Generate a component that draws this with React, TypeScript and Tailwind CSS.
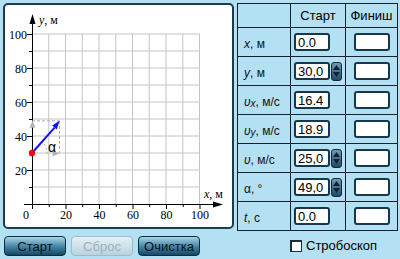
import React from "react";

const X0 = 32;
const Y0 = 204;
const SX = 1.675;
const SY = 1.7;

const px = (v: number) => X0 + v * SX;
const py = (v: number) => Y0 - v * SY;

function Plot() {
  const steps = [0, 10, 20, 30, 40, 50, 60, 70, 80, 90, 100];
  const labels = [20, 40, 60, 80, 100];
  const tipX = px(16.4);
  const tipY = py(48.9);
  const oy = py(30);

  return (
    <svg width={227} height={222} viewBox="5 5 227 222" className="block">
      {steps.slice(1).map((s) => (
        <line key={"gx" + s} x1={px(s)} y1={py(0)} x2={px(s)} y2={py(100)} stroke="#c4c4c4" strokeWidth={1} />
      ))}
      {steps.slice(1).map((s) => (
        <line key={"gy" + s} x1={px(0)} y1={py(s)} x2={px(100)} y2={py(s)} stroke="#c4c4c4" strokeWidth={1} />
      ))}

      {/* axes */}
      <line x1={24} y1={Y0 + 0.5} x2={216} y2={Y0 + 0.5} stroke="#000" strokeWidth={1} />
      <polygon points="223,204.5 213,201.5 213,207.5" fill="#000" />
      <line x1={X0 + 0.5} y1={209} x2={X0 + 0.5} y2={22} stroke="#000" strokeWidth={1} />
      <polygon points="32.5,14 29.5,24 35.5,24" fill="#000" />

      {steps.slice(1).map((s) => (
        <line key={"ty" + s} x1={X0 - (s % 20 === 0 ? 5 : 3)} y1={py(s) + 0.5} x2={X0} y2={py(s) + 0.5} stroke="#000" />
      ))}
      {steps.slice(1).map((s) => (
        <line key={"tx" + s} x1={px(s) + 0.5} y1={Y0} x2={px(s) + 0.5} y2={Y0 + (s % 20 === 0 ? 5 : 3)} stroke="#000" />
      ))}

      <g fontFamily="'Liberation Serif', serif" fontSize={12} fill="#000">
        {labels.map((l) => (
          <text key={"ly" + l} x={27} y={py(l) + 4.5} textAnchor="end">{l}</text>
        ))}
        <text x={26} y={219} textAnchor="middle">0</text>
        {labels.map((l) => (
          <text key={"lx" + l} x={px(l) + 0.5} y={219} textAnchor="middle">{l}</text>
        ))}
        <text x={39} y={24}><tspan fontStyle="italic">y</tspan>, м</text>
        <text x={204} y={198}><tspan fontStyle="italic">x</tspan>, м</text>
      </g>

      {/* components */}
      <line x1={X0} y1={tipY} x2={tipX} y2={tipY} stroke="#aaa" strokeDasharray="3 2" />
      <line x1={tipX} y1={tipY} x2={tipX} y2={oy} stroke="#aaa" strokeDasharray="3 2" />
      <polygon points={`${X0 + 0.5},${tipY} ${X0 - 2.5},${tipY + 7} ${X0 + 3.5},${tipY + 7}`} fill="#b4b4b4" />
      <polygon points={`${tipX},${oy + 0.5} ${tipX - 7},${oy - 2.5} ${tipX - 7},${oy + 3.5}`} fill="#b4b4b4" />
      <path d={`M ${X0 + 15} ${oy + 0.5} A 15 15 0 0 0 ${X0 + 15 * 0.656} ${oy - 15 * 0.755}`} fill="none" stroke="#aaa" strokeDasharray="2 2" />

      {/* velocity */}
      <line x1={X0} y1={oy} x2={54.6} y2={127.6} stroke="#1010ff" strokeWidth={2} />
      <polygon points={`${tipX},${tipY} ${56.8},${129.4} ${52.2},${125.4}`} fill="#1010ff" />
      <circle cx={X0} cy={oy} r={3.2} fill="#ff0000" />

      <text x={48} y={152} fontFamily="'Liberation Sans', sans-serif" fontSize={14} fill="#000">α</text>
    </svg>
  );
}

function Field({ value, spin }: { value?: string; spin?: boolean }) {
  return (
    <div className="flex items-center gap-[1px]">
      <div className="w-[36px] h-[18px] border-2 border-[#17384a] rounded-[3px] bg-white pl-[2px] text-[13px] leading-[15px] text-black">
        {value}
      </div>
      {spin && (
        <div className="w-[11px] h-[19px] rounded-[3px] border border-[#0d2a3b] bg-gradient-to-b from-[#6d9cb6] to-[#1d4b66] flex flex-col items-center justify-center gap-[2px]">
          <svg width="7" height="5" viewBox="0 0 7 5"><polygon points="3.5,0 7,5 0,5" fill="#0d2233" /></svg>
          <svg width="7" height="5" viewBox="0 0 7 5"><polygon points="0,0 7,0 3.5,5" fill="#0d2233" /></svg>
        </div>
      )}
    </div>
  );
}

const rows: { label: React.ReactNode; value: string; spin?: boolean }[] = [
  { label: <><i>x</i>, м</>, value: "0.0" },
  { label: <><i>y</i>, м</>, value: "30,0", spin: true },
  { label: <><i>υ</i><sub className="text-[10px] italic">x</sub>, м/с</>, value: "16.4" },
  { label: <><i>υ</i><sub className="text-[10px] italic">y</sub>, м/с</>, value: "18.9" },
  { label: <><i>υ</i>, м/с</>, value: "25,0", spin: true },
  { label: <>α, °</>, value: "49,0", spin: true },
  { label: <><i>t</i>, с</>, value: "0.0" },
];

export default function App() {
  return (
    <div className="w-[400px] h-[259px] bg-[#b3e0f3] overflow-hidden font-['Liberation_Sans',sans-serif] text-black">
      <div className="flex items-start pt-[3px] pl-[3px]">
        <div className="w-[231px] h-[226px] border-2 border-[#1d3c4d] rounded-[5px] bg-white overflow-hidden">
          <Plot />
        </div>

        <div className="ml-[3px] w-[161px] border-l border-t border-[#14222e] text-[13px]">
          <div className="flex h-[24px]">
            <div className="w-[53px] border-r border-b border-[#14222e]" />
            <div className="w-[55px] border-r border-b border-[#14222e] flex items-center justify-center">Старт</div>
            <div className="w-[52px] border-r border-b border-[#14222e] flex items-center justify-center">Финиш</div>
          </div>
          {rows.map((r, i) => (
            <div key={i} className="flex h-[29px]">
              <div className="w-[53px] border-r border-b border-[#14222e] flex items-center pl-[6px] pt-[3px] whitespace-nowrap text-[12px] text-[#111]">
                {r.label}
              </div>
              <div className="w-[55px] border-r border-b border-[#14222e] flex items-center pl-[3px]">
                <Field value={r.value} spin={r.spin} />
              </div>
              <div className="w-[52px] border-r border-b border-[#14222e] flex items-center pl-[8px]">
                <Field />
              </div>
            </div>
          ))}
        </div>
      </div>

      <div className="flex items-center pl-[4px] mt-[5px]">
        <button className="w-[62px] h-[20px] border border-[#0b2c40] rounded-[4px] bg-gradient-to-b from-[#a8d4e6] via-[#4a8ba8] to-[#124866] text-[13px] leading-none text-[#04121c]">
          Старт
        </button>
        <button className="ml-[5px] w-[62px] h-[20px] border border-[#9fbac8] rounded-[4px] bg-gradient-to-b from-[#e4f1f6] to-[#b9d3de] text-[13px] leading-none text-[#9fb0b8]">
          Сброс
        </button>
        <button className="ml-[5px] w-[62px] h-[20px] border border-[#0b2c40] rounded-[4px] bg-gradient-to-b from-[#a8d4e6] via-[#4a8ba8] to-[#124866] text-[13px] leading-none text-[#04121c]">
          Очистка
        </button>
        <div className="ml-[90px] flex items-center gap-[4px]">
          <div className="w-[12px] h-[12px] bg-white border border-[#1d2d38] border-l-2 border-t-2" />
          <span className="text-[13px]">Стробоскоп</span>
        </div>
      </div>
    </div>
  );
}
